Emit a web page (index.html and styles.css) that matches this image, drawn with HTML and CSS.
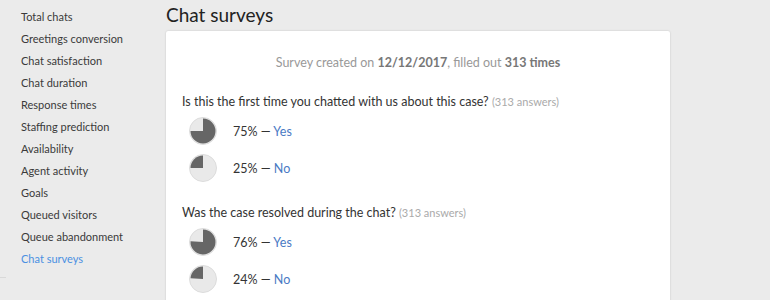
FILE: index.html
```html
<!DOCTYPE html>
<html>
<head>
<meta charset="utf-8">
<link rel="stylesheet" href="styles.css">
</head>
<body>
<div class="layout">
  <nav class="sidebar">
    <a class="nav-item">Total chats</a>
    <a class="nav-item">Greetings conversion</a>
    <a class="nav-item">Chat satisfaction</a>
    <a class="nav-item">Chat duration</a>
    <a class="nav-item">Response times</a>
    <a class="nav-item">Staffing prediction</a>
    <a class="nav-item">Availability</a>
    <a class="nav-item">Agent activity</a>
    <a class="nav-item">Goals</a>
    <a class="nav-item">Queued visitors</a>
    <a class="nav-item">Queue abandonment</a>
    <a class="nav-item active">Chat surveys</a>
    <div class="sidebar-rule"></div>
  </nav>
  <main class="main">
    <h1 class="title">Chat surveys</h1>
    <section class="card">
      <p class="summary">Survey created on <b>12/12/2017</b>, filled out <b>313 times</b></p>

      <div class="question">
        <h2 class="q-title">Is this the first time you chatted with us about this case? <span class="q-count">(313 answers)</span></h2>
        <div class="answer">
          <svg class="pie" viewBox="0 0 28 28" width="28" height="28"><circle cx="14" cy="14" r="13.5" class="pie-bg"/><path class="pie-fg" d="M14 14 L14 1.5 A12.5 12.5 0 1 1 1.5 14 Z"/></svg>
          <span class="answer-text">75% — <span class="answer-label">Yes</span></span>
        </div>
        <div class="answer">
          <svg class="pie" viewBox="0 0 28 28" width="28" height="28"><circle cx="14" cy="14" r="13.5" class="pie-bg"/><path class="pie-fg" d="M14 14 L1.5 14 A12.5 12.5 0 0 1 14 1.5 Z"/></svg>
          <span class="answer-text">25% — <span class="answer-label">No</span></span>
        </div>
      </div>

      <div class="question">
        <h2 class="q-title">Was the case resolved during the chat? <span class="q-count">(313 answers)</span></h2>
        <div class="answer">
          <svg class="pie" viewBox="0 0 28 28" width="28" height="28"><circle cx="14" cy="14" r="13.5" class="pie-bg"/><path class="pie-fg" d="M14 14 L14 1.5 A12.5 12.5 0 1 1 1.525 13.215 Z"/></svg>
          <span class="answer-text">76% — <span class="answer-label">Yes</span></span>
        </div>
        <div class="answer">
          <svg class="pie" viewBox="0 0 28 28" width="28" height="28"><circle cx="14" cy="14" r="13.5" class="pie-bg"/><path class="pie-fg" d="M14 14 L1.525 13.215 A12.5 12.5 0 0 1 14 1.5 Z"/></svg>
          <span class="answer-text">24% — <span class="answer-label">No</span></span>
        </div>
      </div>
    </section>
  </main>
</div>
</body>
</html>
```
FILE: styles.css
```css
html, body {
  margin: 0;
  padding: 0;
  background: #ebebeb;
  font-family: Lato, "Open Sans", sans-serif;
  color: #333;
  height: 100%;
  overflow: hidden;
}
.layout {
  display: flex;
  align-items: flex-start;
}
.sidebar {
  width: 166px;
  flex: none;
  display: flex;
  flex-direction: column;
  padding-top: 6px;
}
.nav-item {
  display: block;
  padding-left: 21px;
  font-size: 11px;
  line-height: 22px;
  color: #3a3a3a;
  cursor: pointer;
}
.nav-item.active {
  color: #4a90e2;
}
.sidebar-rule {
  margin-top: 7px;
  width: 6px;
  height: 1px;
  background: #d9d9d9;
}
.main {
  flex: none;
  width: 504px;
}
.title {
  margin: 3px 0 4px;
  font-size: 19px;
  line-height: 24px;
  font-weight: 400;
  color: #222;
}
.card {
  background: #fff;
  box-shadow: 0 0 2px rgba(0, 0, 0, 0.18);
  border-radius: 2px;
  padding: 22px 16px 24px;
}
.summary {
  margin: 0 0 19px;
  text-align: center;
  font-size: 12.5px;
  line-height: 20px;
  color: #999;
}
.summary b {
  color: #777;
  font-weight: 700;
}
.question {
  display: flex;
  flex-direction: column;
  gap: 9px;
  margin-bottom: 21px;
}
.question:last-child {
  margin-bottom: 0;
}
.q-title {
  margin: 0 0 -4px;
  font-size: 12.5px;
  line-height: 20px;
  font-weight: 400;
  color: #333;
}
.q-count {
  font-size: 11px;
  color: #aaa;
}
.answer {
  display: flex;
  align-items: center;
  gap: 16px;
  padding-left: 7px;
}
.pie {
  display: block;
  flex: none;
}
.pie-bg {
  fill: #e9e9e9;
  stroke: #dcdcdc;
  stroke-width: 1;
}
.pie-fg {
  fill: #666;
}
.answer-text {
  font-size: 12.5px;
  color: #333;
}
.answer-label {
  color: #4a7ac4;
}
```
